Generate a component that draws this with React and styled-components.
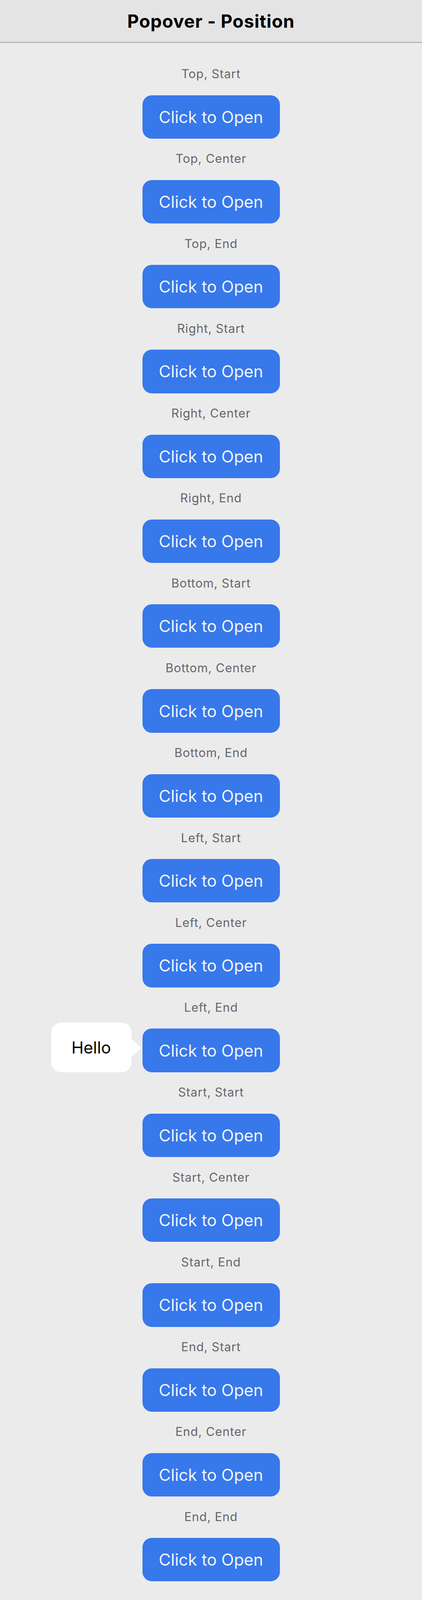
import React from 'react'
import styled, { createGlobalStyle } from 'styled-components'

// vertical sizes follow the window height (design drawn at 4524px tall)
const v = (px) => `${((px / 4524) * 100).toFixed(4)}vh`

const Global = createGlobalStyle`
  *, *::before, *::after { box-sizing: border-box; }
  html, body { margin: 0; padding: 0; background: #ebebeb; }
  body { font-family: Inter, "Noto Sans", sans-serif; -webkit-font-smoothing: antialiased; }
`

const Page = styled.div`
  height: 100vh;
  overflow: hidden;
  display: flex;
  flex-direction: column;
  background: #ebebeb;
`

const Header = styled.header`
  flex: none;
  height: ${v(121)};
  display: flex;
  align-items: center;
  justify-content: center;
  background: #e4e4e4;
  border-bottom: 3px solid #b9b9b9;
`

const Title = styled.h1`
  margin: 0;
  padding-top: 2px;
  font-size: 46px;
  line-height: 56px;
  font-weight: 700;
  letter-spacing: 0.02em;
  color: #000;
`

const List = styled.main`
  display: flex;
  flex-direction: column;
  align-items: center;
  gap: ${v(37)};
  padding-top: ${v(68)};
`

const Item = styled.section`
  display: flex;
  flex-direction: column;
  align-items: center;
`

const Label = styled.div`
  height: ${v(40)};
  line-height: ${v(40)};
  margin-bottom: ${v(40)};
  font-size: 31px;
  letter-spacing: 0.03em;
  color: #66666b;
`

const Anchor = styled.div`
  position: relative;
  display: flex;
`

const OpenButton = styled.button`
  display: block;
  width: 352px;
  height: ${v(123)};
  border: none;
  border-radius: 24px;
  background: #3778eb;
  color: #f2f4fa;
  font-family: Inter, "Noto Sans", sans-serif;
  font-size: 42px;
  font-weight: 400;
  padding: 0;
  cursor: pointer;
`

const Popover = styled.div`
  position: absolute;
  right: calc(100% + 28px);
  bottom: 0;
  width: 206px;
  height: ${v(140)};
  display: flex;
  align-items: center;
  justify-content: center;
  background: #fff;
  border-radius: 26px;
  font-size: 42px;
  color: #000;
`

const Arrow = styled.svg`
  position: absolute;
  left: 100%;
  top: ${v(47)};
  width: 24px;
  height: ${v(48)};
`

const positions = [
  'Top, Start', 'Top, Center', 'Top, End',
  'Right, Start', 'Right, Center', 'Right, End',
  'Bottom, Start', 'Bottom, Center', 'Bottom, End',
  'Left, Start', 'Left, Center', 'Left, End',
  'Start, Start', 'Start, Center', 'Start, End',
  'End, Start', 'End, Center', 'End, End',
]

export default function App() {
  return (
    <Page>
      <Global />
      <Header>
        <Title>Popover - Position</Title>
      </Header>
      <List>
        {positions.map((p) => (
          <Item key={p}>
            <Label>{p}</Label>
            <Anchor>
              <OpenButton>Click to Open</OpenButton>
              {p === 'Left, End' && (
                <Popover>
                  Hello
                  <Arrow viewBox="0 0 24 48" preserveAspectRatio="none" aria-hidden="true">
                    <path d="M0 0 L0 48 Q3 48 6 44 L22.5 26 Q24 24 22.5 22 L6 4 Q3 0 0 0 Z" fill="#fff" />
                  </Arrow>
                </Popover>
              )}
            </Anchor>
          </Item>
        ))}
      </List>
    </Page>
  )
}
